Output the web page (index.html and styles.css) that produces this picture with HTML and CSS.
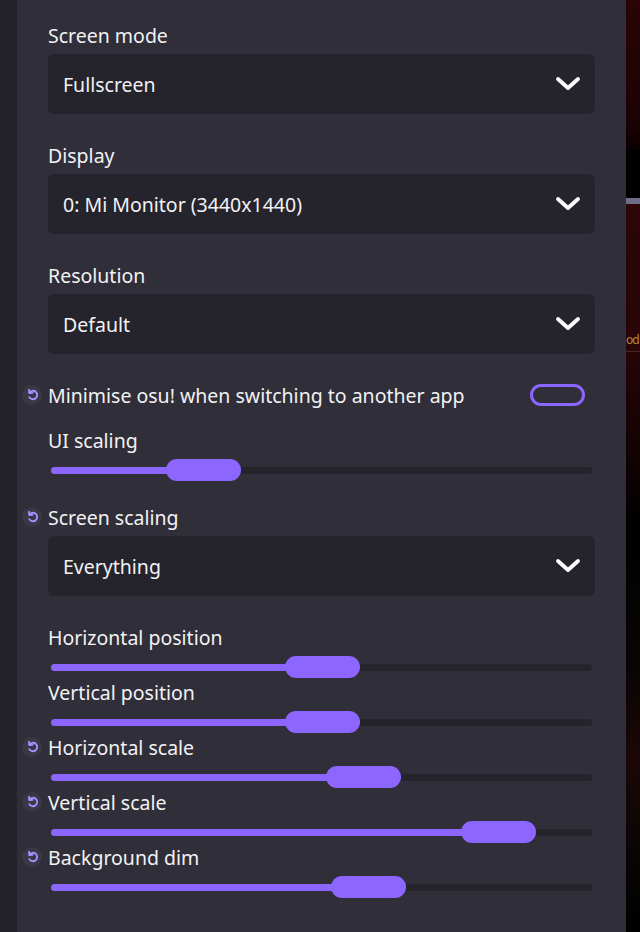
FILE: index.html
```html
<!DOCTYPE html>
<html lang="en">
<head>
  <meta charset="UTF-8">
  <meta name="viewport" content="width=device-width, initial-scale=1.0">
  <title>Graphics settings</title>
  <link rel="stylesheet" href="styles.css">
</head>
<body>

<div class="screen">
  <div class="rail"></div>

  <section class="panel">

    <div class="setting">
      <div class="label">Screen mode</div>
      <div class="dropdown">
        <span>Fullscreen</span>
        <svg class="chevron" viewBox="0 0 26 16"><polyline points="3,3 13,12 23,3"/></svg>
      </div>
    </div>

    <div class="setting">
      <div class="label">Display</div>
      <div class="dropdown">
        <span>0: Mi Monitor (3440x1440)</span>
        <svg class="chevron" viewBox="0 0 26 16"><polyline points="3,3 13,12 23,3"/></svg>
      </div>
    </div>

    <div class="setting">
      <div class="label">Resolution</div>
      <div class="dropdown">
        <span>Default</span>
        <svg class="chevron" viewBox="0 0 26 16"><polyline points="3,3 13,12 23,3"/></svg>
      </div>
    </div>

    <div class="setting checkbox-setting">
      <div class="label">
        <span class="revert"><svg viewBox="0 0 16 16"><path d="M4.6 6.2 A4.5 4.5 0 1 1 4.6 10.8"/><polyline points="4.3,3 4.6,6.4 8,6.1"/></svg></span>
        Minimise osu! when switching to another app
      </div>
      <div class="toggle"></div>
    </div>

    <div class="setting slider-setting before-dropdown">
      <div class="label">UI scaling</div>
      <div class="slider">
        <div class="slider-fill" style="width: 119px"></div>
        <div class="slider-thumb"></div>
        <div class="slider-rest"></div>
      </div>
    </div>

    <div class="setting">
      <div class="label">
        <span class="revert"><svg viewBox="0 0 16 16"><path d="M4.6 6.2 A4.5 4.5 0 1 1 4.6 10.8"/><polyline points="4.3,3 4.6,6.4 8,6.1"/></svg></span>
        Screen scaling
      </div>
      <div class="dropdown">
        <span>Everything</span>
        <svg class="chevron" viewBox="0 0 26 16"><polyline points="3,3 13,12 23,3"/></svg>
      </div>
    </div>

    <div class="setting slider-setting">
      <div class="label">Horizontal position</div>
      <div class="slider">
        <div class="slider-fill" style="width: 238px"></div>
        <div class="slider-thumb"></div>
        <div class="slider-rest"></div>
      </div>
    </div>

    <div class="setting slider-setting">
      <div class="label">Vertical position</div>
      <div class="slider">
        <div class="slider-fill" style="width: 238px"></div>
        <div class="slider-thumb"></div>
        <div class="slider-rest"></div>
      </div>
    </div>

    <div class="setting slider-setting">
      <div class="label">
        <span class="revert"><svg viewBox="0 0 16 16"><path d="M4.6 6.2 A4.5 4.5 0 1 1 4.6 10.8"/><polyline points="4.3,3 4.6,6.4 8,6.1"/></svg></span>
        Horizontal scale
      </div>
      <div class="slider">
        <div class="slider-fill" style="width: 279px"></div>
        <div class="slider-thumb"></div>
        <div class="slider-rest"></div>
      </div>
    </div>

    <div class="setting slider-setting">
      <div class="label">
        <span class="revert"><svg viewBox="0 0 16 16"><path d="M4.6 6.2 A4.5 4.5 0 1 1 4.6 10.8"/><polyline points="4.3,3 4.6,6.4 8,6.1"/></svg></span>
        Vertical scale
      </div>
      <div class="slider">
        <div class="slider-fill" style="width: 414px"></div>
        <div class="slider-thumb"></div>
        <div class="slider-rest"></div>
      </div>
    </div>

    <div class="setting slider-setting">
      <div class="label">
        <span class="revert"><svg viewBox="0 0 16 16"><path d="M4.6 6.2 A4.5 4.5 0 1 1 4.6 10.8"/><polyline points="4.3,3 4.6,6.4 8,6.1"/></svg></span>
        Background dim
      </div>
      <div class="slider">
        <div class="slider-fill" style="width: 284px"></div>
        <div class="slider-thumb"></div>
        <div class="slider-rest"></div>
      </div>
    </div>

  </section>

  <div class="backdrop">
    <div class="bg-top"></div>
    <div class="bg-band"></div>
    <div class="bg-card"><span class="bg-text">od</span></div>
    <div class="bg-bottom"></div>
  </div>
</div>

</body>
</html>
```

FILE: styles.css
```css
body {
  margin: 0;
  background-color: #000000;
  font-family: 'Noto Sans', 'Lato', sans-serif;
  color: #f2f2f4;
}

.screen {
  display: flex;
  width: 640px;
  height: 932px;
  overflow: hidden;
}

.rail {
  flex-shrink: 0;
  width: 17px;
  background-color: #232129;
}

.panel {
  flex-shrink: 0;
  width: 547px;
  padding: 24px 31px 0 31px;
  background-color: #302e38;
}

.setting {
  margin-bottom: 30px;
}

.label {
  display: flex;
  align-items: center;
  height: 24px;
  font-size: 19.5px;
  line-height: 24px;
  white-space: nowrap;
}

.revert {
  display: flex;
  justify-content: center;
  align-items: center;
  flex-shrink: 0;
  width: 20px;
  height: 20px;
  margin-left: -26px;
  margin-right: 6px;
  margin-top: -3px;
  border-radius: 50%;
  background-color: #3a3747;
}

.revert svg {
  width: 15px;
  height: 15px;
  fill: none;
  stroke: #a78fff;
  stroke-width: 2;
  stroke-linecap: round;
  stroke-linejoin: round;
}

.dropdown {
  display: flex;
  align-items: center;
  justify-content: space-between;
  height: 60px;
  margin-top: 6px;
  padding: 0 14px 0 15px;
  border-radius: 6px;
  background-color: #25232c;
  font-size: 19.5px;
}

.chevron {
  width: 26px;
  height: 16px;
  fill: none;
  stroke: #ffffff;
  stroke-width: 3.8;
  stroke-linecap: round;
  stroke-linejoin: round;
}

.checkbox-setting {
  display: flex;
  align-items: center;
  justify-content: space-between;
  margin-bottom: 21px;
}

.toggle {
  width: 49px;
  height: 16px;
  margin-right: 10px;
  margin-top: -2px;
  border: 3px solid #8c66ff;
  border-radius: 12px;
}

.slider-setting {
  margin-bottom: 3px;
}

.slider-setting.before-dropdown {
  margin-bottom: 25px;
}

.slider {
  display: flex;
  align-items: center;
  height: 22px;
  margin: 6px 3px 0 3px;
}

.slider-fill {
  height: 7px;
  border-radius: 4px 0 0 4px;
  background-color: #8c66ff;
}

.slider-thumb {
  width: 75px;
  height: 22px;
  margin-left: -4px;
  border-radius: 11px;
  background-color: #8c66ff;
}

.slider-rest {
  flex: 1;
  height: 7px;
  border-radius: 0 4px 4px 0;
  background-color: #25232c;
}

.backdrop {
  flex: 1;
  min-width: 0;
  display: flex;
  flex-direction: column;
}

.bg-top {
  height: 150px;
  background: linear-gradient(#2a0407, #1c0205 80%, #0b0000);
}

.bg-band {
  height: 48px;
  background-color: #000000;
}

.bg-card {
  height: 147px;
  display: flex;
  align-items: flex-end;
  overflow: hidden;
  border-top: 6px solid #6e6d88;
  border-bottom: 1px solid #4a2427;
  background: linear-gradient(#2c0609, #280508 70%, #2a0509);
}

.bg-text {
  padding-bottom: 3px;
  font-size: 12px;
  letter-spacing: -1px;
  color: #b48a3c;
}

.bg-bottom {
  flex: 1;
  background: linear-gradient(#260408, #120203 18%, #000000 30%, #0a0505 55%, #1c0707 70%, #0e0606 82%, #000000);
}
```
